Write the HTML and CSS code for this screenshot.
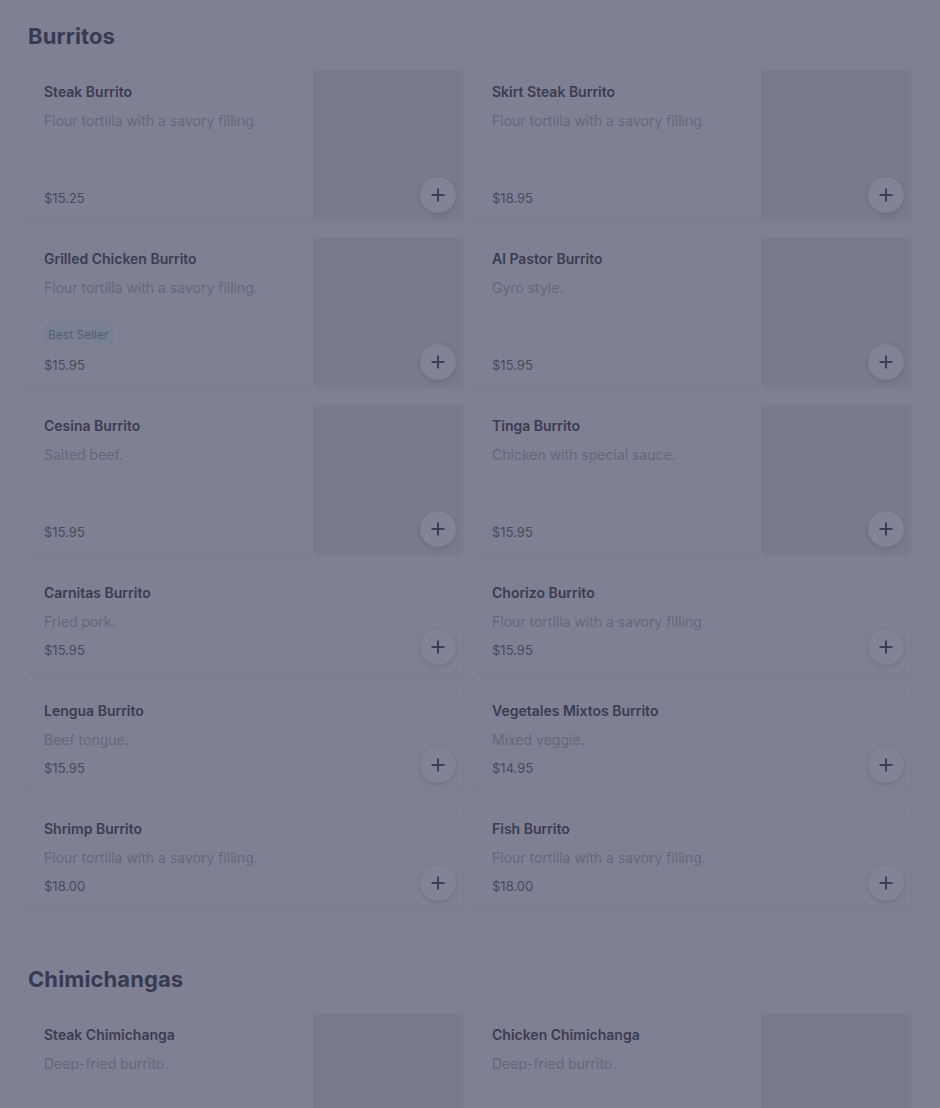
FILE: index.html
```html
<!DOCTYPE html>
<html>
<head>
<meta charset="utf-8">
<link rel="stylesheet" href="styles.css">
</head>
<body>
<main class="menu">
  <section class="section">
    <h2 class="section-title">Burritos</h2>
    <div class="grid">
      <div class="card has-img">
        <div class="info"><div class="name">Steak Burrito</div><div class="desc">Flour tortilla with a savory filling.</div><div class="price">$15.25</div></div>
        <div class="thumb"></div>
        <button class="add"><svg viewBox="0 0 16 16"><path d="M8 1.5v13M1.5 8h13"/></svg></button>
      </div>
      <div class="card has-img">
        <div class="info"><div class="name">Skirt Steak Burrito</div><div class="desc">Flour tortilla with a savory filling.</div><div class="price">$18.95</div></div>
        <div class="thumb"></div>
        <button class="add"><svg viewBox="0 0 16 16"><path d="M8 1.5v13M1.5 8h13"/></svg></button>
      </div>
      <div class="card has-img">
        <div class="info"><div class="name">Grilled Chicken Burrito</div><div class="desc">Flour tortilla with a savory filling.</div><div class="badge">Best Seller</div><div class="price">$15.95</div></div>
        <div class="thumb"></div>
        <button class="add"><svg viewBox="0 0 16 16"><path d="M8 1.5v13M1.5 8h13"/></svg></button>
      </div>
      <div class="card has-img">
        <div class="info"><div class="name">Al Pastor Burrito</div><div class="desc">Gyro style.</div><div class="price">$15.95</div></div>
        <div class="thumb"></div>
        <button class="add"><svg viewBox="0 0 16 16"><path d="M8 1.5v13M1.5 8h13"/></svg></button>
      </div>
      <div class="card has-img">
        <div class="info"><div class="name">Cesina Burrito</div><div class="desc">Salted beef.</div><div class="price">$15.95</div></div>
        <div class="thumb"></div>
        <button class="add"><svg viewBox="0 0 16 16"><path d="M8 1.5v13M1.5 8h13"/></svg></button>
      </div>
      <div class="card has-img">
        <div class="info"><div class="name">Tinga Burrito</div><div class="desc">Chicken with special sauce.</div><div class="price">$15.95</div></div>
        <div class="thumb"></div>
        <button class="add"><svg viewBox="0 0 16 16"><path d="M8 1.5v13M1.5 8h13"/></svg></button>
      </div>
      <div class="card">
        <div class="info"><div class="name">Carnitas Burrito</div><div class="desc">Fried pork.</div><div class="price">$15.95</div></div>
        <button class="add"><svg viewBox="0 0 16 16"><path d="M8 1.5v13M1.5 8h13"/></svg></button>
      </div>
      <div class="card">
        <div class="info"><div class="name">Chorizo Burrito</div><div class="desc">Flour tortilla with a savory filling.</div><div class="price">$15.95</div></div>
        <button class="add"><svg viewBox="0 0 16 16"><path d="M8 1.5v13M1.5 8h13"/></svg></button>
      </div>
      <div class="card">
        <div class="info"><div class="name">Lengua Burrito</div><div class="desc">Beef tongue.</div><div class="price">$15.95</div></div>
        <button class="add"><svg viewBox="0 0 16 16"><path d="M8 1.5v13M1.5 8h13"/></svg></button>
      </div>
      <div class="card">
        <div class="info"><div class="name">Vegetales Mixtos Burrito</div><div class="desc">Mixed veggie.</div><div class="price">$14.95</div></div>
        <button class="add"><svg viewBox="0 0 16 16"><path d="M8 1.5v13M1.5 8h13"/></svg></button>
      </div>
      <div class="card">
        <div class="info"><div class="name">Shrimp Burrito</div><div class="desc">Flour tortilla with a savory filling.</div><div class="price">$18.00</div></div>
        <button class="add"><svg viewBox="0 0 16 16"><path d="M8 1.5v13M1.5 8h13"/></svg></button>
      </div>
      <div class="card">
        <div class="info"><div class="name">Fish Burrito</div><div class="desc">Flour tortilla with a savory filling.</div><div class="price">$18.00</div></div>
        <button class="add"><svg viewBox="0 0 16 16"><path d="M8 1.5v13M1.5 8h13"/></svg></button>
      </div>
    </div>
  </section>
  <section class="section">
    <h2 class="section-title">Chimichangas</h2>
    <div class="grid">
      <div class="card has-img">
        <div class="info"><div class="name">Steak Chimichanga</div><div class="desc">Deep-fried burrito.</div></div>
        <div class="thumb"></div>
      </div>
      <div class="card has-img">
        <div class="info"><div class="name">Chicken Chimichanga</div><div class="desc">Deep-fried burrito.</div></div>
        <div class="thumb"></div>
      </div>
    </div>
  </section>
</main>
</body>
</html>
```
FILE: styles.css
```css
html, body {
  margin: 0;
  padding: 0;
  background: #7f8093;
  overflow: hidden;
}
body {
  font-family: Inter, "Liberation Sans", sans-serif;
  color: #3a3b50;
}
.menu {
  padding: 0 28px;
}
.section {
  padding: 22px 0 33px;
}
.section-title {
  margin: 0 0 20px;
  font-size: 22px;
  line-height: 28px;
  font-weight: 700;
  color: #383a52;
  letter-spacing: 0.1px;
}
.grid {
  display: grid;
  grid-template-columns: 1fr 1fr;
  column-gap: 12px;
  row-gap: 15px;
}
.card {
  position: relative;
  display: flex;
  border: 1px solid #7c7d91;
  border-radius: 4px;
  box-shadow: 0 1px 2px rgba(40, 40, 70, 0.03);
}
.info {
  flex: 1;
  display: flex;
  flex-direction: column;
  padding: 10px 15px 12px;
  min-width: 0;
}
.name {
  font-size: 14px;
  line-height: 22px;
  font-weight: 600;
  color: #3b3c52;
}
.desc {
  margin-top: 8px;
  font-size: 14px;
  line-height: 20px;
  color: #65677b;
}
.price {
  margin-top: 7px;
  font-size: 13px;
  line-height: 22px;
  color: #484a60;
}
.has-img .price {
  margin-top: auto;
}
.badge {
  align-self: flex-start;
  margin-top: auto;
  margin-bottom: 10px;
  padding: 1px 4px;
  font-size: 12px;
  line-height: 17px;
  color: #4f6070;
  background: #7a8094;
  border-radius: 2px;
}
.badge + .price {
  margin-top: 0;
}
.thumb {
  flex: 0 0 150px;
  height: 150px;
  background: #787a8d;
  border-radius: 4px;
}
.add {
  position: absolute;
  right: 7px;
  bottom: 8px;
  width: 36px;
  height: 36px;
  padding: 0;
  border: none;
  border-radius: 50%;
  background: #818396;
  box-shadow: 0 2px 5px rgba(30, 30, 60, 0.12), 0 0 1px rgba(30, 30, 60, 0.1);
  display: flex;
  align-items: center;
  justify-content: center;
}
.add svg {
  width: 16px;
  height: 16px;
  fill: none;
  stroke: #3c3e54;
  stroke-width: 2;
  stroke-linecap: butt;
}
```
